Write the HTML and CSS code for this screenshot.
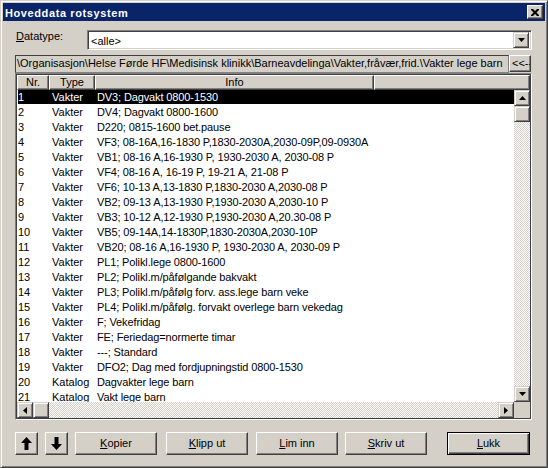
FILE: index.html
```html
<!DOCTYPE html>
<html>
<head>
<meta charset="utf-8">
<link rel="stylesheet" href="styles.css">
</head>
<body>
<div class="window">
  <div class="titlebar">
    <span class="title">Hoveddata rotsystem</span>
    <span class="close"><svg width="8" height="7" viewBox="0 0 8 7"><path d="M0 0h2l2 2 2-2h2v1l-2.5 2.5L8 6v1H6L4 5 2 7H0V6l2.5-2.5L0 1z" fill="#000"/></svg></span>
  </div>
  <div class="content">
    <div class="typerow">
      <span class="lbl"><u>D</u>atatype:</span>
      <div class="combo">
        <span class="combo-text">&lt;alle&gt;</span>
        <span class="dropbtn"><svg width="7" height="4" viewBox="0 0 7 4"><path d="M0 0h7L3.5 4z" fill="#000"/></svg></span>
      </div>
    </div>
    <div class="pathrow">
      <div class="path">\Organisasjon\Helse Førde HF\Medisinsk klinikk\Barneavdelinga\Vakter,fråvær,frid.\Vakter lege barn</div>
      <div class="pathbtn">&lt;&lt;--</div>
    </div>
    <div class="grid">
      <div class="grid-inner">
        <div class="header">
          <div class="hc c1">Nr.</div>
          <div class="hc c2">Type</div>
          <div class="hc c3">Info</div>
          <div class="hc c4"></div>
        </div>
        <div class="gbody">
          <div class="rows">
            <div class="row sel"><span class="c1">1</span><span class="c2">Vakter</span><span class="c3">DV3; Dagvakt 0800-1530</span></div>
            <div class="row"><span class="c1">2</span><span class="c2">Vakter</span><span class="c3">DV4; Dagvakt 0800-1600</span></div>
            <div class="row"><span class="c1">3</span><span class="c2">Vakter</span><span class="c3">D220; 0815-1600 bet.pause</span></div>
            <div class="row"><span class="c1">4</span><span class="c2">Vakter</span><span class="c3">VF3; 08-16A,16-1830 P,1830-2030A,2030-09P,09-0930A</span></div>
            <div class="row"><span class="c1">5</span><span class="c2">Vakter</span><span class="c3">VB1; 08-16 A,16-1930 P, 1930-2030 A, 2030-08 P</span></div>
            <div class="row"><span class="c1">6</span><span class="c2">Vakter</span><span class="c3">VF4; 08-16 A, 16-19 P, 19-21 A, 21-08 P</span></div>
            <div class="row"><span class="c1">7</span><span class="c2">Vakter</span><span class="c3">VF6; 10-13 A,13-1830 P,1830-2030 A,2030-08 P</span></div>
            <div class="row"><span class="c1">8</span><span class="c2">Vakter</span><span class="c3">VB2; 09-13 A,13-1930 P,1930-2030 A,2030-10 P</span></div>
            <div class="row"><span class="c1">9</span><span class="c2">Vakter</span><span class="c3">VB3; 10-12 A,12-1930 P,1930-2030 A,20.30-08 P</span></div>
            <div class="row"><span class="c1">10</span><span class="c2">Vakter</span><span class="c3">VB5; 09-14A,14-1830P,1830-2030A,2030-10P</span></div>
            <div class="row"><span class="c1">11</span><span class="c2">Vakter</span><span class="c3">VB20; 08-16 A,16-1930 P, 1930-2030 A, 2030-09 P</span></div>
            <div class="row"><span class="c1">12</span><span class="c2">Vakter</span><span class="c3">PL1; Polikl.lege 0800-1600</span></div>
            <div class="row"><span class="c1">13</span><span class="c2">Vakter</span><span class="c3">PL2; Polikl.m/påfølgande bakvakt</span></div>
            <div class="row"><span class="c1">14</span><span class="c2">Vakter</span><span class="c3">PL3; Polikl.m/påfølg forv. ass.lege barn veke</span></div>
            <div class="row"><span class="c1">15</span><span class="c2">Vakter</span><span class="c3">PL4; Polikl.m/påfølg. forvakt overlege barn vekedag</span></div>
            <div class="row"><span class="c1">16</span><span class="c2">Vakter</span><span class="c3">F; Vekefridag</span></div>
            <div class="row"><span class="c1">17</span><span class="c2">Vakter</span><span class="c3">FE; Feriedag=normerte timar</span></div>
            <div class="row"><span class="c1">18</span><span class="c2">Vakter</span><span class="c3">---; Standard</span></div>
            <div class="row"><span class="c1">19</span><span class="c2">Vakter</span><span class="c3">DFO2; Dag med fordjupningstid 0800-1530</span></div>
            <div class="row"><span class="c1">20</span><span class="c2">Katalog</span><span class="c3">Dagvakter lege barn</span></div>
            <div class="row"><span class="c1">21</span><span class="c2">Katalog</span><span class="c3">Vakt lege barn</span></div>
          </div>
          <div class="vscroll">
            <span class="sbtn"><svg width="7" height="4" viewBox="0 0 7 4"><path d="M3.5 0L7 4H0z" fill="#000"/></svg></span>
            <span class="sbtn thumb"></span>
            <span class="track"></span>
            <span class="sbtn"><svg width="7" height="4" viewBox="0 0 7 4"><path d="M0 0h7L3.5 4z" fill="#000"/></svg></span>
          </div>
        </div>
        <div class="hscroll">
          <span class="sbtn"><svg width="4" height="7" viewBox="0 0 4 7"><path d="M4 0v7L0 3.5z" fill="#000"/></svg></span>
          <span class="sbtn thumb"></span>
          <span class="track"></span>
          <span class="sbtn"><svg width="4" height="7" viewBox="0 0 4 7"><path d="M0 0v7l4-3.5z" fill="#000"/></svg></span>
          <span class="corner"></span>
        </div>
      </div>
    </div>
    <div class="buttons">
      <span class="btn arrow"><svg width="11" height="13" viewBox="0 0 11 13"><path d="M5.5 0L11 6H7.5v7h-4V6H0z" fill="#000"/></svg></span>
      <span class="btn arrow"><svg width="11" height="13" viewBox="0 0 11 13"><path d="M3.5 0h4v7H11l-5.5 6L0 7h3.5z" fill="#000"/></svg></span>
      <span class="btn wide"><u>K</u>opier</span>
      <span class="btn wide gap2"><u>K</u>lipp ut</span>
      <span class="btn wide gap1"><u>L</u>im inn</span>
      <span class="btn wide"><u>S</u>kriv ut</span>
      <span class="btn wide default"><u>L</u>ukk</span>
    </div>
  </div>
</div>
</body>
</html>
```
FILE: styles.css
```css
* { box-sizing: border-box; }
body {
  margin: 0;
  font-family: "Liberation Sans", Arial, sans-serif;
  font-size: 11px;
  color: #000;
}
u { text-decoration: underline; text-underline-offset: 1px; }

.window {
  width: 548px;
  height: 468px;
  background: #d4d0c8;
  border: 1px solid;
  border-color: #d4d0c8 #404040 #404040 #d4d0c8;
  box-shadow: inset 1px 1px #fff, inset -1px -1px #808080;
  padding: 2px;
  display: flex;
  flex-direction: column;
}

.titlebar {
  height: 18px;
  background: #0a246a;
  display: flex;
  align-items: center;
  padding: 0 2px 0 2px;
}
.title {
  flex: 1;
  color: #fff;
  font-weight: bold;
  font-size: 11px;
  letter-spacing: 0.6px;
  line-height: 18px;
  padding-top: 1px;
}
.close {
  width: 16px;
  height: 14px;
  background: #d4d0c8;
  border: 1px solid;
  border-color: #fff #404040 #404040 #fff;
  box-shadow: inset -1px -1px #808080;
  display: flex;
  align-items: center;
  justify-content: center;
  padding-right: 1px;
}

.content {
  padding: 9px 13px 0 12px;
  display: flex;
  flex-direction: column;
}

.typerow {
  display: flex;
  height: 20px;
}
.lbl {
  width: 72px;
  padding-left: 1px;
  line-height: 13px;
}
.combo {
  flex: 1;
  display: flex;
  background: #fff;
  border: 1px solid;
  border-color: #808080 #fff #fff #808080;
  box-shadow: inset 1px 1px #404040, inset -1px -1px #d4d0c8;
  padding: 1px 2px 1px 1px;
}
.combo-text {
  flex: 1;
  line-height: 16px;
  padding-left: 2px;
  padding-top: 1px;
}
.dropbtn {
  width: 16px;
  height: 16px;
  background: #d4d0c8;
  border: 1px solid;
  border-color: #d4d0c8 #404040 #404040 #d4d0c8;
  box-shadow: inset 1px 1px #fff, inset -1px -1px #808080;
  display: flex;
  align-items: center;
  justify-content: center;
}

.pathrow {
  display: flex;
  height: 18px;
  margin-top: 5px;
}
.path {
  width: 494px;
  border: 1px solid;
  border-color: #404040 #808080 #808080 #404040;
  line-height: 15px;
  padding-left: 1px;
  white-space: nowrap;
  overflow: hidden;
}
.pathbtn {
  width: 22px;
  height: 17px;
  border: 1px solid;
  border-color: #fff #404040 #404040 #fff;
  box-shadow: inset -1px -1px #808080;
  line-height: 14px;
  padding-left: 2px;
  white-space: nowrap;
  overflow: hidden;
}

.grid {
  height: 347px;
  border: 1px solid;
  border-color: #808080 #fff #fff #808080;
}
.grid-inner {
  height: 100%;
  border: 1px solid #404040;
  background: #fff;
  display: flex;
  flex-direction: column;
}

.header {
  display: flex;
  height: 15px;
  background: #d4d0c8;
}
.hc {
  height: 15px;
  border: 1px solid;
  border-color: #fff #404040 #404040 #fff;
  box-shadow: inset -1px -1px #808080;
  text-align: center;
  line-height: 12px;
}
.header .c4 { flex: 1; }

.c1 { width: 32px; flex: none; }
.c2 { width: 46px; flex: none; }
.c3 { width: 279px; flex: none; }

.gbody {
  display: flex;
  height: 312px;
}
.rows {
  width: 497px;
  overflow: hidden;
}
.row {
  display: flex;
  height: 15px;
  line-height: 15px;
  white-space: nowrap;
}
.row .c1 { padding-left: 1px; }
.row .c2 { padding-left: 3px; }
.row .c3 { padding-left: 2px; letter-spacing: -0.12px; }
.row.sel {
  background: #000;
  color: #fff;
  box-shadow: inset 0 -1px #fff, inset 1px 0 #fff;
}

.vscroll {
  width: 16px;
  display: flex;
  flex-direction: column;
}
.hscroll {
  height: 16px;
  display: flex;
}
.sbtn {
  width: 16px;
  height: 16px;
  flex: none;
  background: #d4d0c8;
  border: 1px solid;
  border-color: #d4d0c8 #404040 #404040 #d4d0c8;
  box-shadow: inset 1px 1px #fff, inset -1px -1px #808080;
  display: flex;
  align-items: center;
  justify-content: center;
}
.track {
  flex: 1;
  background-image: repeating-conic-gradient(#fff 0% 25%, #d4d0c8 0% 50%);
  background-size: 2px 2px;
}
.corner {
  width: 16px;
  height: 16px;
  background: #d4d0c8;
}

.buttons {
  display: flex;
  gap: 7px;
  margin-top: 12px;
  height: 23px;
}
.btn {
  height: 23px;
  background: #d4d0c8;
  border: 1px solid;
  border-color: #fff #404040 #404040 #fff;
  box-shadow: inset -1px -1px #808080;
  display: flex;
  align-items: center;
  justify-content: center;
  line-height: 13px;
}
.btn.arrow { width: 23px; }
.btn.wide { width: 82px; }
.gap2 { margin-left: 2px; }
.gap1 { margin-left: 1px; }
.btn.default {
  width: 83px;
  margin-left: auto;
  margin-right: 2px;
  border: 1px solid #000;
  box-shadow: inset 1px 1px #fff, inset -1px -1px #404040, inset -2px -2px #808080;
}
```
